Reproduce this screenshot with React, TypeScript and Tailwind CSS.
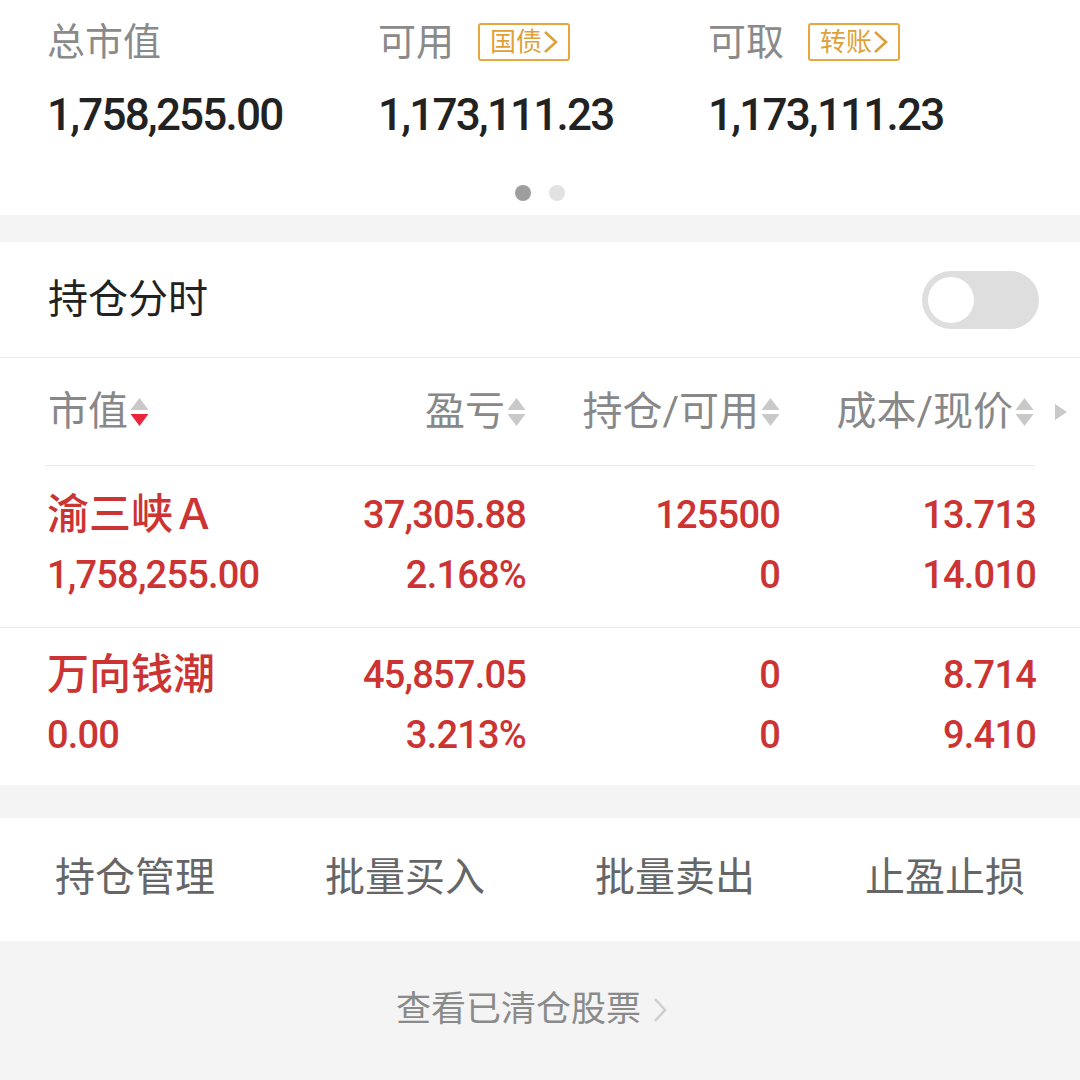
import React from 'react'

const FONT = { fontFamily: 'Roboto, "Noto Sans CJK SC", sans-serif' }

function SortArrows({ active }: { active?: boolean }) {
  return (
    <svg width="21" height="32" viewBox="0 0 21 32" className="ml-[1px]">
      <path d="M10.5 2 L19.5 14 L1.5 14 Z" fill="#c9c9c9" />
      <path d="M1.5 18 L19.5 18 L10.5 30 Z" fill={active ? '#e8273a' : '#c9c9c9'} />
    </svg>
  )
}

function Badge({ label }: { label: string }) {
  return (
    <span className="ml-6 flex items-center h-[38px] px-[10px] rounded-[3px] border-[2.5px] border-[#e8a73e] text-[#e0a038] text-[26px] leading-none">
      {label}
      <svg width="15" height="24" viewBox="0 0 15 24" className="ml-[1px]">
        <path d="M2 2 L13 12 L2 22" fill="none" stroke="#e0a038" strokeWidth="2.6" />
      </svg>
    </span>
  )
}

const summary = [
  { label: '总市值', value: '1,758,255.00' },
  { label: '可用', value: '1,173,111.23', badge: '国债' },
  { label: '可取', value: '1,173,111.23', badge: '转账' },
]

const holdings = [
  { name: '渝三峡Ａ', mv: '1,758,255.00', pl: '37,305.88', pct: '2.168%', pos: '125500', avail: '0', cost: '13.713', price: '14.010', pt: 'pt-[19px] pb-[22px]' },
  { name: '万向钱潮', mv: '0.00', pl: '45,857.05', pct: '3.213%', pos: '0', avail: '0', cost: '8.714', price: '9.410', pt: 'pt-[17px] pb-[20px]' },
]

const COLS = 'grid grid-cols-[220px_259px_254px_256px]'

export default function App() {
  return (
    <div className="w-[1080px] h-[1080px] bg-[#f4f4f4] overflow-hidden" style={FONT}>
      {/* account summary */}
      <div className="bg-white h-[215px] pt-[14px]">
        <div className="grid grid-cols-[331px_330px_1fr] pl-[47px]">
          {summary.map((s) => (
            <div key={s.label}>
              <div className="flex items-center h-[56px]">
                <span className="text-[38px] leading-none text-[#8a8a8a]">{s.label}</span>
                {s.badge && <Badge label={s.badge} />}
              </div>
              <div className="mt-[17px] h-[56px] flex items-center text-[44px] font-medium leading-none text-[#222] tracking-[-1.8px]">
                {s.value}
              </div>
            </div>
          ))}
        </div>
        <div className="flex justify-center gap-[18px] mt-[42px]">
          <span className="w-4 h-4 rounded-full bg-[#9e9e9e]" />
          <span className="w-4 h-4 rounded-full bg-[#e2e2e2]" />
        </div>
      </div>

      {/* holdings */}
      <div className="bg-white mt-[27px]">
        <div className="h-[116px] flex items-center justify-between pl-[48px] pr-[41px] border-b border-[#efefef]">
          <span className="text-[40px] leading-none text-[#222]">持仓分时</span>
          <div className="w-[117px] h-[58px] rounded-full bg-[#dedede] flex items-center pl-[6px]">
            <span className="w-[46px] h-[46px] rounded-full bg-white" />
          </div>
        </div>

        <div className="h-[107px] flex items-center pl-[48px] text-[40px] leading-none text-[#888]">
          <div className={COLS + ' w-[989px] items-center'}>
            <div className="flex items-center">市值<SortArrows active /></div>
            <div className="flex items-center justify-end">盈亏<SortArrows /></div>
            <div className="flex items-center justify-end">持仓/可用<SortArrows /></div>
            <div className="flex items-center justify-end pr-[2px]">成本/现价<SortArrows /></div>
          </div>
          <svg width="16" height="20" viewBox="0 0 16 20" className="ml-[16px]">
            <path d="M2 2 L14 10 L2 18 Z" fill="#c9c9c9" />
          </svg>
        </div>
        <div className="mx-[45px] border-t border-[#e8e8e8]" />

        {holdings.map((h, i) => (
          <div key={h.name} className={(i > 0 ? 'border-t border-[#ececec] ' : '') + h.pt + ' pl-[47px] text-[#cc3333] font-medium'}>
            <div className={COLS + ' h-[60px] items-center leading-none'}>
              <span className="text-[42px]">{h.name}</span>
              <span className="text-right text-[38px] tracking-[-0.8px]">{h.pl}</span>
              <span className="text-right text-[38px] tracking-[-0.8px]">{h.pos}</span>
              <span className="text-right text-[38px] tracking-[-0.8px]">{h.cost}</span>
            </div>
            <div className={COLS + ' h-[60px] items-center leading-none text-[38px] tracking-[-0.8px]'}>
              <span>{h.mv}</span>
              <span className="text-right">{h.pct}</span>
              <span className="text-right">{h.avail}</span>
              <span className="text-right">{h.price}</span>
            </div>
          </div>
        ))}
      </div>

      {/* actions */}
      <div className="bg-white mt-[33px] h-[123px] grid grid-cols-4 items-center text-[40px] leading-none text-[#666] pb-[4px]">
        {['持仓管理', '批量买入', '批量卖出', '止盈止损'].map((a) => (
          <span key={a} className="text-center">{a}</span>
        ))}
      </div>

      <div className="h-[141px] flex items-center justify-center gap-[11px] pr-[16px] pb-[4px] text-[35px] leading-none text-[#8a8a8a]">
        <span>查看已清仓股票</span>
        <svg width="16" height="26" viewBox="0 0 16 26">
          <path d="M3 2 L13 13 L3 24" fill="none" stroke="#cfcfcf" strokeWidth="2.6" />
        </svg>
      </div>
    </div>
  )
}
